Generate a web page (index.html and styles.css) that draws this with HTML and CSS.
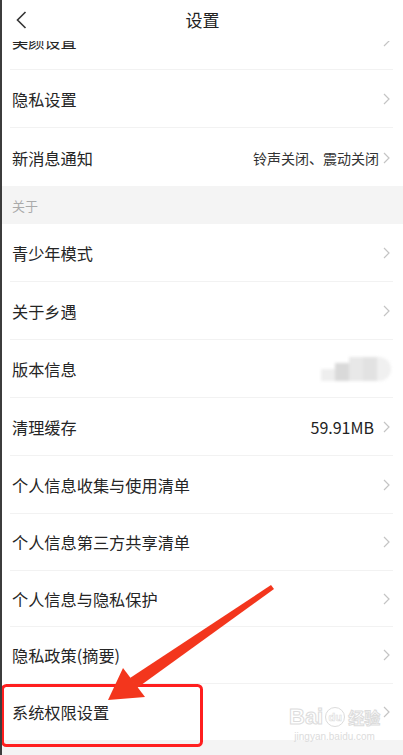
FILE: index.html
```html
<!DOCTYPE html>
<html lang="zh">
<head>
    <meta charset="UTF-8">
    <meta name="viewport" content="width=device-width, initial-scale=1.0">
    <title>设置</title>
    <link rel="stylesheet" href="styles.css">
</head>
<body>
<div class="screen">
    <header class="top-bar">
        <svg class="back" width="11" height="18" viewBox="0 0 11 18">
            <polyline points="9.5,1 1.5,9 9.5,17" fill="none" stroke="#333" stroke-width="1.6"/>
        </svg>
        <h1>设置</h1>
    </header>

    <main class="list">
        <div class="list-inner">
            <div class="row"><span class="label">美颜设置</span><i class="chev"></i></div>
            <div class="row"><span class="label">隐私设置</span><i class="chev"></i></div>
            <div class="row no-line"><span class="label">新消息通知</span><span class="value small">铃声关闭、震动关闭</span><i class="chev"></i></div>

            <div class="section">关于</div>

            <div class="row"><span class="label">青少年模式</span><i class="chev"></i></div>
            <div class="row"><span class="label">关于乡遇</span><i class="chev"></i></div>
            <div class="row">
                <span class="label">版本信息</span>
                <span class="blurred">
                    <b class="p1"></b><b class="p2"></b><b class="p3"></b><b class="p4"></b><b class="p5"></b>
                </span>
            </div>
            <div class="row"><span class="label">清理缓存</span><span class="value">59.91MB</span><i class="chev"></i></div>
            <div class="row"><span class="label">个人信息收集与使用清单</span><i class="chev"></i></div>
            <div class="row tight"><span class="label">个人信息第三方共享清单</span><i class="chev"></i></div>
            <div class="row tight"><span class="label">个人信息与隐私保护</span><i class="chev"></i></div>
            <div class="row tight"><span class="label">隐私政策(摘要)</span><i class="chev"></i></div>
            <div class="row tight no-line"><span class="label">系统权限设置</span><i class="chev"></i></div>
        </div>
        <div class="footer-gap"></div>
    </main>

    <!-- annotation drawn over the screenshot -->
    <svg class="marks" width="403" height="755" viewBox="0 0 403 755">
        <rect x="2.5" y="685.5" width="199" height="60" rx="4" fill="none" stroke="#ff1f1f" stroke-width="3"/>
        <polygon points="271,585 274,589 137,688 130,678" fill="#f3361d"/>
        <polygon points="108,700 123,668 145,697" fill="#f3361d"/>
    </svg>

    <div class="watermark">
        <div class="wm-logo"><span>Bai</span><span class="wm-du">du</span><span class="wm-cn">经验</span></div>
        <div class="wm-url">jingyan.baidu.com</div>
    </div>
</div>
</body>
</html>
```

FILE: styles.css
```css
body {
    margin: 0;
    font-family: "Noto Sans CJK SC", "Noto Sans", sans-serif;
    color: #222;
    background: #fff
}

.screen {
    position: relative;
    width: 403px;
    height: 755px;
    box-sizing: border-box;
    border-left: 2px solid #3c3c3c;
    display: flex;
    flex-direction: column;
    overflow: hidden
}

.top-bar {
    height: 41px;
    flex: none;
    display: flex;
    align-items: center;
    justify-content: center;
    background: #fff;
    position: relative;
    z-index: 1
}

.top-bar h1 {
    margin: 0;
    font-size: 17px;
    font-weight: normal;
    color: #222;
    margin-top: -2px
}

.back {
    position: absolute;
    left: 14px;
    top: 11px
}

.list {
    flex: 1;
    overflow: hidden;
    display: flex;
    flex-direction: column
}

.list-inner {
    margin-top: -29px
}

.row {
    height: 58px;
    box-sizing: border-box;
    margin: 0 10px 0 8px;
    padding: 1px 3px 0 2px;
    display: flex;
    align-items: center;
    border-bottom: 1px solid #f2f2f2
}

.row.tight {
    height: 56.5px
}

.row.no-line {
    border-bottom: none
}

.label {
    flex: 1;
    font-size: 16.2px;
    color: #252525
}

.value {
    font-size: 16px;
    color: #222;
    margin-right: 9px
}

.value.small {
    font-size: 14px;
    color: #333;
    margin-right: 4px
}

.chev {
    width: 7px;
    height: 12px;
    background: url("data:image/svg+xml,%3Csvg xmlns='http://www.w3.org/2000/svg' width='7' height='12'%3E%3Cpolyline points='1,1 6,6 1,11' fill='none' stroke='%23c4c4c4' stroke-width='1.2'/%3E%3C/svg%3E") no-repeat
}

.section {
    height: 38px;
    background: #f4f4f4;
    padding-left: 10px;
    display: flex;
    align-items: center;
    font-size: 13px;
    color: #aaa
}

.blurred {
    display: flex;
    margin-right: -1px;
    filter: blur(1.5px)
}

.blurred b {
    display: block;
    width: 14px;
    height: 24px
}

.blurred .p1 { background: #eeeeee; height: 12px; margin-top: 12px }
.blurred .p2 { background: #d9d9d9; height: 18px; margin-top: 6px }
.blurred .p3 { background: #e8e8e8 }
.blurred .p4 { background: #e2e2e2 }
.blurred .p5 { background: #f0f0f0; border-radius: 0 12px 12px 0 }

.footer-gap {
    flex: 1;
    background: #f4f4f4
}

.marks {
    position: absolute;
    left: -2px;
    top: 0
}

.watermark {
    position: absolute;
    left: 287px;
    top: 704px;
    color: #e4e4e4;
    font-family: "Liberation Sans", Arial, sans-serif;
    text-align: center
}

.wm-logo {
    display: flex;
    align-items: center;
    font-size: 22px;
    font-weight: bold;
    line-height: 26px;
    color: #fff;
    -webkit-text-stroke: 1px #dcdcdc
}

.wm-du {
    font-size: 11px;
    border: 1.5px solid #dcdcdc;
    border-radius: 50%;
    width: 18px;
    height: 18px;
    line-height: 18px;
    margin: 0 3px 0 2px;
    -webkit-text-stroke: 0.6px #dcdcdc
}

.wm-cn {
    font-family: "Noto Sans CJK SC", sans-serif;
    font-size: 16px
}

.wm-url {
    font-size: 10px;
    color: #dcdcdc;
    margin-top: 1px
}
```
